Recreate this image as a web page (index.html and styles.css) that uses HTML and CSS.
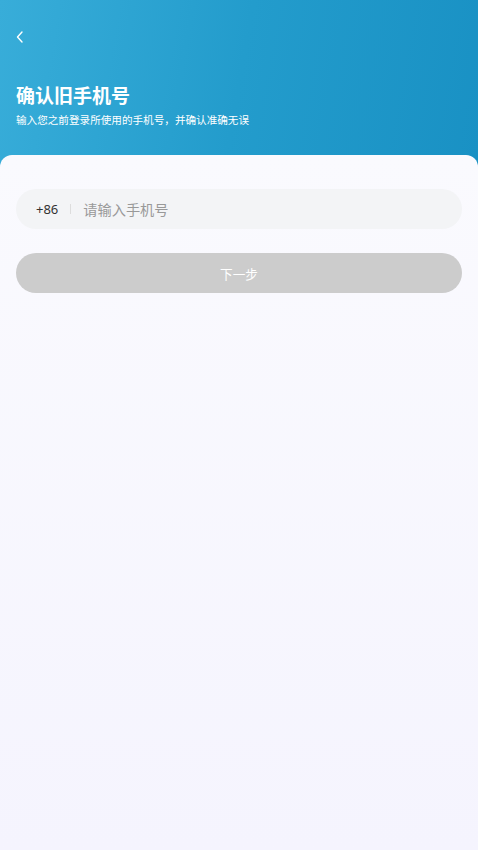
FILE: index.html
```html
<!DOCTYPE html>
<html lang="zh-CN">
<head>
    <meta charset="utf-8">
    <title>确认旧手机号</title>
    <link rel="stylesheet" href="styles.css">
</head>
<body>

<div class="header">
    <div class="nav-bar">
        <svg class="back" width="10" height="14" viewBox="0 0 10 14">
            <polyline points="6,2 1.5,7 6,12" fill="none" stroke="#fff" stroke-width="1.4" stroke-linecap="round" stroke-linejoin="round"/>
        </svg>
    </div>
    <h1 class="title">确认旧手机号</h1>
    <p class="subtitle">输入您之前登录所使用的手机号，并确认准确无误</p>
</div>

<div class="card">
    <div class="phone-field">
        <span class="area-code">+86</span>
        <span class="divider"></span>
        <span class="placeholder">请输入手机号</span>
    </div>
    <div class="next-btn">下一步</div>
</div>

</body>
</html>
```

FILE: styles.css
```css
* {
    box-sizing: border-box;
    font-family: "Noto Sans", "Noto Sans CJK SC", sans-serif;
}
body {
    margin: 0;
    background: #f5f4fe;
}
.header {
    height: 167px;
    padding: 0 16px;
    background: linear-gradient(100deg, #38add9 0%, #239ccc 50%, #1991c4 100%);
    color: #fff;
}
.nav-bar {
    height: 74px;
    display: flex;
    align-items: center;
}
.back {
    display: block;
}
.title {
    margin: 9px 0 0;
    font-size: 19px;
    line-height: 26px;
    font-weight: bold;
}
.subtitle {
    margin: 3px 0 0;
    font-size: 10.6px;
    line-height: 16px;
}
.card {
    margin-top: -12px;
    min-height: 695px;
    padding: 34px 16px 0;
    border-radius: 12px 12px 0 0;
    background: linear-gradient(180deg, #fafafe 0%, #f5f4fe 100%);
}
.phone-field {
    height: 40px;
    border-radius: 20px;
    background: #f3f4f6;
    display: flex;
    align-items: center;
    padding-left: 20px;
}
.area-code {
    font-size: 13px;
    color: #333;
}
.divider {
    width: 1px;
    height: 10px;
    background: #ddd;
    margin: 0 12px;
}
.placeholder {
    font-size: 14.2px;
    color: #999;
}
.next-btn {
    margin-top: 24px;
    height: 40px;
    border-radius: 20px;
    background: #cccccc;
    color: #fff;
    font-size: 12.6px;
    display: flex;
    align-items: center;
    justify-content: center;
}
```
